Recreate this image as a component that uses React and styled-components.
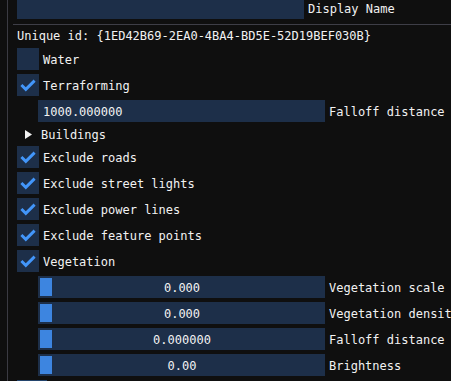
import React from 'react';
import styled, { createGlobalStyle } from 'styled-components';

const Global = createGlobalStyle`
  html, body { margin: 0; padding: 0; background: #0f0f0f; }
  body {
    width: 451px; height: 381px; overflow: hidden;
    font-family: "DejaVu Sans Mono", "Liberation Mono", monospace;
    font-size: 12px; color: #f2f2f2;
  }
`;

const Window = styled.div`
  display: flex;
  height: 381px;
  overflow: hidden;
  background: #0f0f0f;
`;

const Gutter = styled.div`
  width: 7px;
  flex: none;
`;

const Panel = styled.div`
  flex: 1;
  min-width: 0;
  border-left: 1px solid #3b3b43;
  padding-left: 9px;
  display: flex;
  flex-direction: column;
  gap: 4px;
  overflow: hidden;
`;

const Row = styled.div`
  display: flex;
  align-items: center;
  gap: 4px;
  height: ${p => p.$h || 22}px;
  padding-left: ${p => p.$indent || 0}px;
  margin-top: ${p => p.$mt || 0}px;
  white-space: nowrap;
  flex: none;
`;

const Frame = styled.div`
  position: relative;
  width: 287px;
  height: 22px;
  flex: none;
  box-sizing: border-box;
  background: rgb(29, 47, 73);
  display: flex;
  align-items: center;
  justify-content: ${p => (p.$center ? 'center' : 'flex-start')};
  padding: 2px 4px 0 5px;
  line-height: 16px;
  color: #f2f2f2;
`;

const Grab = styled.div`
  position: absolute;
  left: 2px;
  top: 2px;
  width: 12px;
  height: 18px;
  background: rgb(61, 133, 224);
`;

const Label = styled.span`
  line-height: 16px;
  padding-top: 2px;
`;

const Separator = styled.div`
  height: 1px;
  flex: none;
  background: #3e3e47;
  margin: 1px 0 -1px -4px;
`;

const TextLine = styled.div`
  height: 16px;
  line-height: 16px;
  white-space: nowrap;
  flex: none;
`;

const Box = styled.div`
  width: 22px;
  height: 22px;
  flex: none;
  background: rgb(29, 47, 73);
  display: flex;
`;

const TreeRow = styled.div`
  display: flex;
  align-items: center;
  height: 16px;
  padding-left: 8px;
  gap: 9px;
  flex: none;
`;

const Button = styled.div`
  width: 30px;
  height: 22px;
  flex: none;
  background: rgb(36, 69, 109);
`;

function Checkbox({ checked, label }) {
  return (
    <Row>
      <Box>
        {checked && (
          <svg width="22" height="22" viewBox="0 0 22 22">
            <polyline
              points="4.4,11 8.8,15.4 17.6,6.6"
              fill="none"
              stroke="rgb(66,150,250)"
              strokeWidth="2.9"
              strokeLinejoin="miter"
            />
          </svg>
        )}
      </Box>
      <Label>{label}</Label>
    </Row>
  );
}

function Slider({ value, label }) {
  return (
    <Row $indent={21}>
      <Frame $center>
        <Grab />
        <span>{value}</span>
      </Frame>
      <Label>{label}</Label>
    </Row>
  );
}

export default function App() {
  return (
    <Window>
      <Global />
      <Gutter />
      <Panel>
        <Row $mt={-3}>
          <Frame />
          <Label>Display Name</Label>
        </Row>
        <Separator />
        <TextLine>Unique id: {'{1ED42B69-2EA0-4BA4-BD5E-52D19BEF030B}'}</TextLine>
        <Checkbox label="Water" />
        <Checkbox checked label="Terraforming" />
        <Row $indent={21}>
          <Frame>1000.000000</Frame>
          <Label>Falloff distance</Label>
        </Row>
        <TreeRow>
          <svg width="7" height="9" viewBox="0 0 7 9">
            <polygon points="0,0 7,4.5 0,9" fill="#f2f2f2" />
          </svg>
          <Label>Buildings</Label>
        </TreeRow>
        <Checkbox checked label="Exclude roads" />
        <Checkbox checked label="Exclude street lights" />
        <Checkbox checked label="Exclude power lines" />
        <Checkbox checked label="Exclude feature points" />
        <Checkbox checked label="Vegetation" />
        <Slider value="0.000" label="Vegetation scale" />
        <Slider value="0.000" label="Vegetation density" />
        <Slider value="0.000000" label="Falloff distance" />
        <Slider value="0.00" label="Brightness" />
        <Button />
      </Panel>
    </Window>
  );
}
